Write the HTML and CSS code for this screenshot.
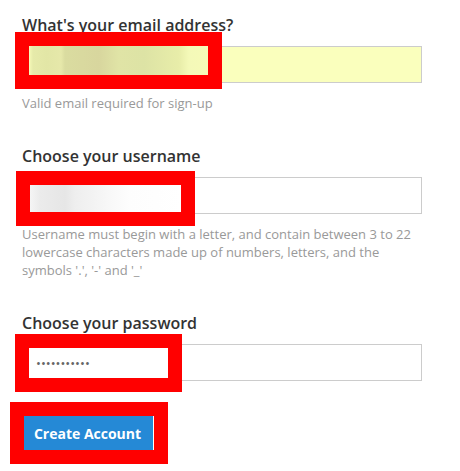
FILE: index.html
```html
<!DOCTYPE html>
<html lang="en">
<head>
  <meta charset="UTF-8">
  <title>Sign up</title>
  <meta name="viewport" content="width=device-width, initial-scale=1.0">
  <link rel="stylesheet" href="styles.css">
</head>
<body>
  <form class="signup" onsubmit="return false">
    <div class="field">
      <label class="field-label" for="email">What's your email address?</label>
      <input class="field-input autofilled" id="email" type="email">
      <p class="field-help">Valid email required for sign-up</p>
    </div>

    <div class="field">
      <label class="field-label" for="username">Choose your username</label>
      <input class="field-input" id="username" type="text">
      <p class="field-help">Username must begin with a letter, and contain between 3 to 22 lowercase characters made up of numbers, letters, and the symbols '.', '-' and '_'</p>
    </div>

    <div class="field">
      <label class="field-label" for="password">Choose your password</label>
      <input class="field-input pw" id="password" type="password" value="aaaaaaaaaaa">
    </div>

    <button class="btn" type="submit">Create Account</button>
  </form>

  <!-- redaction boxes drawn over the screenshot -->
  <div class="redact redact-email"><div class="blur blur-email"></div></div>
  <div class="redact redact-user"><div class="blur blur-user"></div></div>
  <div class="redact redact-pass"></div>
  <div class="redact redact-btn"></div>
</body>
</html>
```

FILE: styles.css
```css
body {
  font-family: 'Open Sans', 'Liberation Sans', sans-serif;
  background: #fff;
  color: #333;
  margin: 0;
  padding: 14px 22px 0;
}
.signup {
  width: 400px;
}
.field {
  margin-bottom: 33px;
}
.field-label {
  display: block;
  font-size: 16px;
  font-weight: 600;
  line-height: 22px;
  margin-bottom: 10px;
}
.field-input {
  display: block;
  width: 100%;
  height: 37px;
  box-sizing: border-box;
  border: 1px solid #ccc;
  padding: 0 12px;
  font-family: inherit;
  font-size: 14px;
  background: #fff;
}
.autofilled {
  background: #faffbd;
}
.pw {
  padding-left: 13px;
  font-size: 13px;
  color: #666;
}
.field-help {
  margin: 11px 0 0;
  font-size: 13px;
  line-height: 18px;
  color: #999;
}
.btn {
  margin-top: 2px;
  width: 131px;
  height: 34px;
  padding: 0;
  border: none;
  background: #2589d6;
  color: #fff;
  font-family: inherit;
  font-size: 14px;
  font-weight: 700;
  cursor: pointer;
}

.redact {
  position: absolute;
  box-sizing: border-box;
  border: 14px solid #ff0000;
}
.redact-email {
  left: 15px;
  top: 32px;
  width: 207px;
  height: 57px;
}
.redact-user {
  left: 16px;
  top: 171px;
  width: 179px;
  height: 55px;
}
.redact-pass {
  left: 15px;
  top: 334px;
  width: 167px;
  height: 58px;
}
.redact-btn {
  left: 10px;
  top: 402px;
  width: 158px;
  height: 62px;
}
.blur {
  height: 100%;
}
.blur-email {
  background: linear-gradient(90deg,
    #f6fab8 0, #e6eaaa 4px, #e2e6a6 18px, #e6e8aa 32px,
    #dadca0 36px, #d8d69e 70px, #e0e4a6 90px, #dde3a5 115px,
    #e8eda9 150px, #f4f9b8 160px, #f6fab8 100%);
}
.blur-user {
  background: linear-gradient(90deg,
    #f5f5f5 0, #ebebeb 10px, #e6e6e6 35px, #eeeeee 45px,
    #f2f2f2 60px, #f8f8f8 80px, #fdfdfd 100px, #fff 100%);
}
```
